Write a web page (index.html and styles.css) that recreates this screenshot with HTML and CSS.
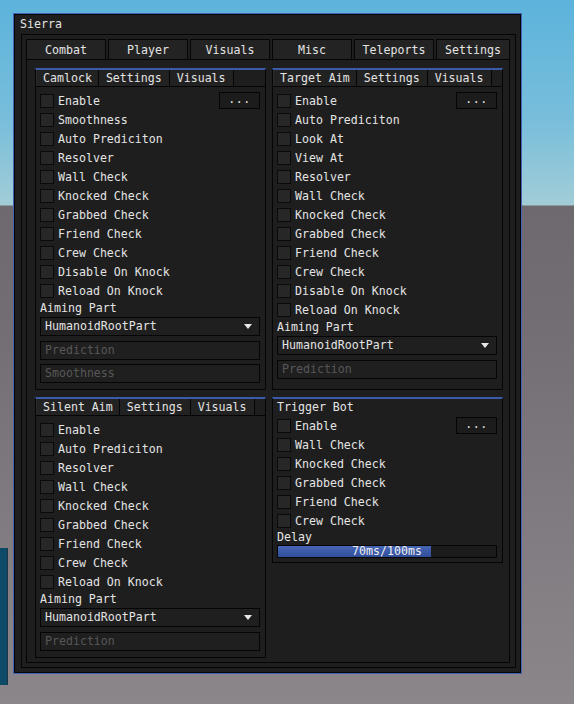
FILE: index.html
```html
<!DOCTYPE html>
<html>
<head>
<meta charset="utf-8">
<link rel="stylesheet" href="styles.css">
</head>
<body>
<div class="scene-block"></div>
<div class="window">
  <div class="title">Sierra</div>
  <div class="group">
    <div class="tabs">
      <div class="tab">Combat</div>
      <div class="tab">Player</div>
      <div class="tab">Visuals</div>
      <div class="tab">Misc</div>
      <div class="tab">Teleports</div>
      <div class="tab">Settings</div>
    </div>
    <div class="content">
      <div class="panel">
        <div class="subtabs"><div class="subtab">Camlock</div><div class="subtab">Settings</div><div class="subtab">Visuals</div></div>
        <div class="body">
          <div class="row"><span class="cb"></span><span class="lbl">Enable</span><span class="btn">...</span></div>
          <div class="row"><span class="cb"></span><span class="lbl">Smoothness</span></div>
          <div class="row"><span class="cb"></span><span class="lbl">Auto Prediciton</span></div>
          <div class="row"><span class="cb"></span><span class="lbl">Resolver</span></div>
          <div class="row"><span class="cb"></span><span class="lbl">Wall Check</span></div>
          <div class="row"><span class="cb"></span><span class="lbl">Knocked Check</span></div>
          <div class="row"><span class="cb"></span><span class="lbl">Grabbed Check</span></div>
          <div class="row"><span class="cb"></span><span class="lbl">Friend Check</span></div>
          <div class="row"><span class="cb"></span><span class="lbl">Crew Check</span></div>
          <div class="row"><span class="cb"></span><span class="lbl">Disable On Knock</span></div>
          <div class="row"><span class="cb"></span><span class="lbl">Reload On Knock</span></div>
          <div class="label">Aiming Part</div>
          <div class="dropdown"><span>HumanoidRootPart</span><span class="arrow"></span></div>
          <div class="input">Prediction</div>
          <div class="input input-tight">Smoothness</div>
        </div>
      </div>
      <div class="panel">
        <div class="subtabs"><div class="subtab">Target Aim</div><div class="subtab">Settings</div><div class="subtab">Visuals</div></div>
        <div class="body">
          <div class="row"><span class="cb"></span><span class="lbl">Enable</span><span class="btn">...</span></div>
          <div class="row"><span class="cb"></span><span class="lbl">Auto Prediciton</span></div>
          <div class="row"><span class="cb"></span><span class="lbl">Look At</span></div>
          <div class="row"><span class="cb"></span><span class="lbl">View At</span></div>
          <div class="row"><span class="cb"></span><span class="lbl">Resolver</span></div>
          <div class="row"><span class="cb"></span><span class="lbl">Wall Check</span></div>
          <div class="row"><span class="cb"></span><span class="lbl">Knocked Check</span></div>
          <div class="row"><span class="cb"></span><span class="lbl">Grabbed Check</span></div>
          <div class="row"><span class="cb"></span><span class="lbl">Friend Check</span></div>
          <div class="row"><span class="cb"></span><span class="lbl">Crew Check</span></div>
          <div class="row"><span class="cb"></span><span class="lbl">Disable On Knock</span></div>
          <div class="row"><span class="cb"></span><span class="lbl">Reload On Knock</span></div>
          <div class="label">Aiming Part</div>
          <div class="dropdown"><span>HumanoidRootPart</span><span class="arrow"></span></div>
          <div class="input">Prediction</div>
        </div>
      </div>
      <div class="panel">
        <div class="subtabs"><div class="subtab">Silent Aim</div><div class="subtab">Settings</div><div class="subtab">Visuals</div></div>
        <div class="body">
          <div class="row"><span class="cb"></span><span class="lbl">Enable</span></div>
          <div class="row"><span class="cb"></span><span class="lbl">Auto Prediciton</span></div>
          <div class="row"><span class="cb"></span><span class="lbl">Resolver</span></div>
          <div class="row"><span class="cb"></span><span class="lbl">Wall Check</span></div>
          <div class="row"><span class="cb"></span><span class="lbl">Knocked Check</span></div>
          <div class="row"><span class="cb"></span><span class="lbl">Grabbed Check</span></div>
          <div class="row"><span class="cb"></span><span class="lbl">Friend Check</span></div>
          <div class="row"><span class="cb"></span><span class="lbl">Crew Check</span></div>
          <div class="row"><span class="cb"></span><span class="lbl">Reload On Knock</span></div>
          <div class="label">Aiming Part</div>
          <div class="dropdown"><span>HumanoidRootPart</span><span class="arrow"></span></div>
          <div class="input">Prediction</div>
        </div>
      </div>
      <div class="panel panel-short">
        <div class="ptitle">Trigger Bot</div>
        <div class="body body-trigger">
          <div class="row"><span class="cb"></span><span class="lbl">Enable</span><span class="btn">...</span></div>
          <div class="row"><span class="cb"></span><span class="lbl">Wall Check</span></div>
          <div class="row"><span class="cb"></span><span class="lbl">Knocked Check</span></div>
          <div class="row"><span class="cb"></span><span class="lbl">Grabbed Check</span></div>
          <div class="row"><span class="cb"></span><span class="lbl">Friend Check</span></div>
          <div class="row"><span class="cb"></span><span class="lbl">Crew Check</span></div>
          <div class="label label-short">Delay</div>
          <div class="slider">
            <div class="fill" style="width:70%"></div>
            <div class="slider-text">70ms/100ms</div>
          </div>
        </div>
      </div>
    </div>
  </div>
</div>
</body>
</html>
```
FILE: styles.css
```css
html, body {
  margin: 0;
  padding: 0;
}
body {
  width: 574px;
  height: 704px;
  overflow: hidden;
  position: relative;
  font-family: "DejaVu Sans Mono", "Liberation Mono", monospace;
  font-size: 11.6px;
  color: #e4e4e4;
  background:
    linear-gradient(to bottom, #5cb3db 0px, #78bedb 120px, #a2cdd7 205px, #6d696e 206px, #726e73 330px, #7f7b80 520px, #8a868a 704px);
  display: flow-root;
}
.scene-block {
  position: absolute;
  left: 0;
  top: 548px;
  width: 7px;
  height: 137px;
  background: #0c4a68;
  border-right: 1px solid #1b3746;
}
.window {
  box-sizing: border-box;
  width: 509px;
  height: 661px;
  margin: 13px 0 0 13px;
  border: 1px solid #4363b8;
  box-shadow: inset 0 0 0 1px #050505;
  background: #1e1e1e;
  padding: 0 5px 5px 7px;
  display: flex;
  flex-direction: column;
}
.title {
  height: 20px;
  line-height: 20px;
  margin-left: -1px;
  white-space: nowrap;
}
.group {
  box-sizing: border-box;
  height: 634px;
  border: 1px solid #050505;
  padding: 4px 5px 4px 4px;
  display: flex;
  flex-direction: column;
}
.tabs {
  display: grid;
  grid-template-columns: repeat(5, 80px) 1fr;
  column-gap: 2px;
  height: 20px;
}
.tab {
  box-sizing: border-box;
  border: 1px solid #050505;
  border-bottom: none;
  background: #232323;
  text-align: center;
  line-height: 20px;
  white-space: nowrap;
  overflow: hidden;
}
.content {
  flex: 1;
  border: 1px solid #050505;
  padding: 8px 6px 4px 8px;
  display: grid;
  grid-template-columns: 231px 231px;
  grid-template-rows: auto auto;
  column-gap: 6px;
  row-gap: 7px;
  align-content: start;
}
.panel {
  box-sizing: border-box;
  border: 1px solid #050505;
  border-top: 2px solid #3b5aa8;
  background: #1e1e1e;
}
.panel-short {
  align-self: start;
}
.subtabs {
  display: flex;
  height: 16px;
  border-bottom: 1px solid #050505;
}
.subtab {
  border-left: 1px solid #050505;
  border-right: 1px solid #050505;
  margin-right: -1px;
  padding: 0 7px;
  line-height: 16px;
  background: #222222;
  white-space: nowrap;
}
.subtab:first-child {
  border-left-color: #2a2a2a;
  padding: 0 6px;
}
.ptitle {
  height: 17px;
  line-height: 17px;
  padding-left: 4px;
}
.body {
  padding: 4px 5px 6px 4px;
  display: flex;
  flex-direction: column;
}
.body-trigger {
  padding-top: 0;
  padding-bottom: 4px;
}
.row {
  height: 19px;
  display: flex;
  align-items: center;
  white-space: nowrap;
}
.cb {
  box-sizing: border-box;
  width: 14px;
  height: 14px;
  border: 1px solid #0a0a0a;
  background: #272727;
  flex: none;
}
.lbl {
  margin-left: 4px;
}
.btn {
  margin-left: auto;
  box-sizing: border-box;
  width: 41px;
  height: 17px;
  border: 1px solid #050505;
  background: #1c1c1c;
  text-align: center;
  line-height: 13px;
  letter-spacing: 0.5px;
}
.label {
  height: 17px;
  line-height: 17px;
}
.label-short {
  height: 15px;
  line-height: 15px;
}
.dropdown {
  box-sizing: border-box;
  height: 19px;
  border: 1px solid #050505;
  background: #1f1f1f;
  padding: 0 7px 0 4px;
  display: flex;
  align-items: center;
  justify-content: space-between;
  line-height: 17px;
}
.arrow {
  width: 0;
  height: 0;
  border-left: 4px solid transparent;
  border-right: 4px solid transparent;
  border-top: 5px solid #e8e8e8;
}
.input {
  box-sizing: border-box;
  height: 19px;
  margin-top: 5px;
  border: 1px solid #050505;
  background: #1f1f1f;
  padding-left: 4px;
  line-height: 17px;
  color: #575757;
}
.input-tight {
  margin-top: 4px;
}
.slider {
  box-sizing: border-box;
  height: 13px;
  border: 1px solid #050505;
  background: #1b1b1b;
  display: grid;
}
.fill {
  grid-area: 1 / 1;
  height: 11px;
  background: linear-gradient(to bottom, #4766b6, #2f4d98);
}
.slider-text {
  grid-area: 1 / 1;
  text-align: center;
  line-height: 11px;
  color: #f0f0f0;
}
```
